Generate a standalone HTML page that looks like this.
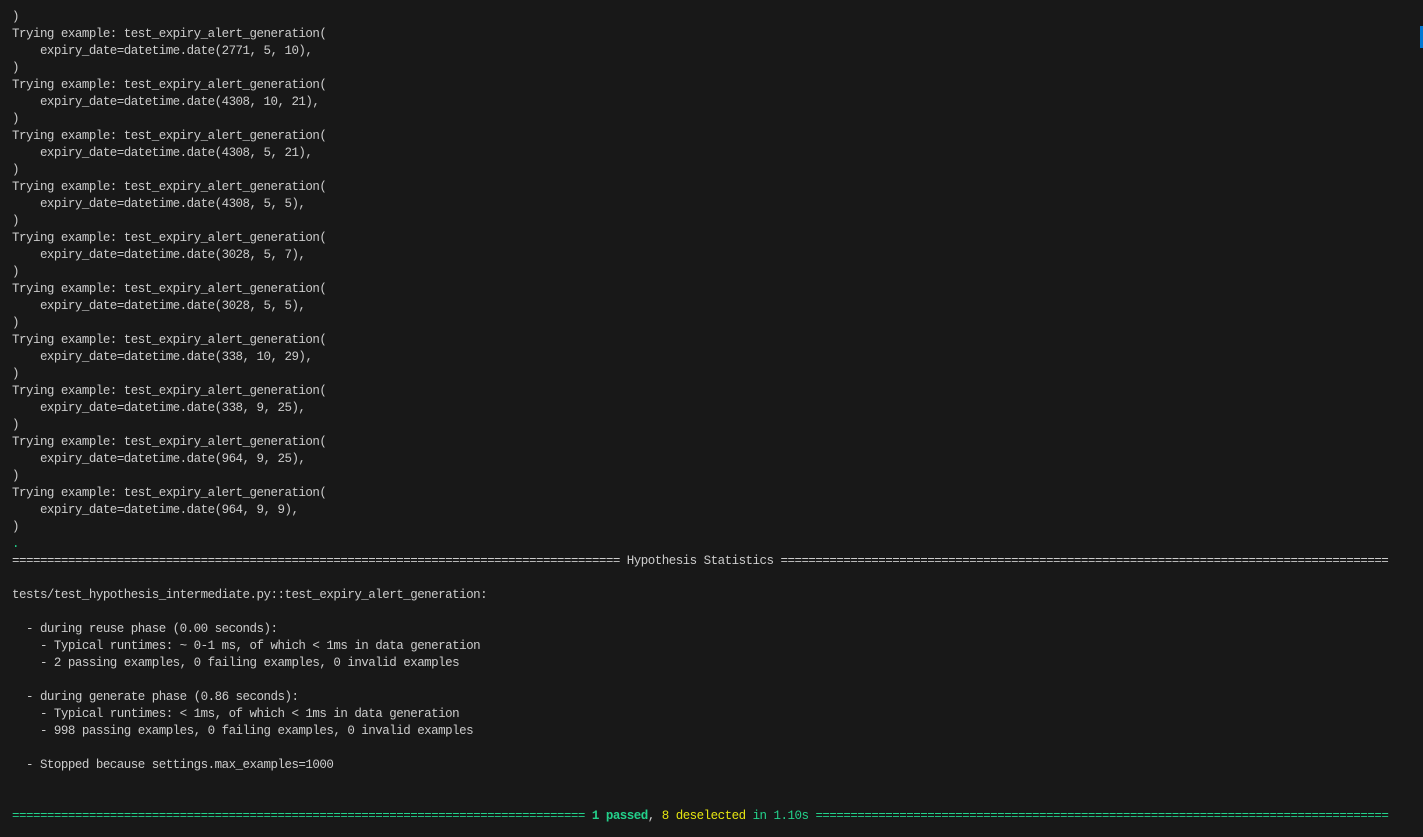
<!DOCTYPE html>
<html><head><meta charset="utf-8"><style>
html,body{margin:0;padding:0;background:#181818;width:1423px;height:837px;overflow:hidden}
pre{margin:0;position:absolute;left:12px;top:9px;font-family:"Liberation Mono",monospace;font-size:12.5px;letter-spacing:-0.515px;line-height:17px;color:#cccccc}
.g{color:#23d18b}.y{color:#e5e510}.b{font-weight:bold}
.sb{position:absolute;left:1420px;top:26px;width:3px;height:22px;background:#0078d4}
</style></head><body>
<pre>)
Trying example: test_expiry_alert_generation(
    expiry_date=datetime.date(2771, 5, 10),
)
Trying example: test_expiry_alert_generation(
    expiry_date=datetime.date(4308, 10, 21),
)
Trying example: test_expiry_alert_generation(
    expiry_date=datetime.date(4308, 5, 21),
)
Trying example: test_expiry_alert_generation(
    expiry_date=datetime.date(4308, 5, 5),
)
Trying example: test_expiry_alert_generation(
    expiry_date=datetime.date(3028, 5, 7),
)
Trying example: test_expiry_alert_generation(
    expiry_date=datetime.date(3028, 5, 5),
)
Trying example: test_expiry_alert_generation(
    expiry_date=datetime.date(338, 10, 29),
)
Trying example: test_expiry_alert_generation(
    expiry_date=datetime.date(338, 9, 25),
)
Trying example: test_expiry_alert_generation(
    expiry_date=datetime.date(964, 9, 25),
)
Trying example: test_expiry_alert_generation(
    expiry_date=datetime.date(964, 9, 9),
)
<span class="g">.</span>
======================================================================================= Hypothesis Statistics =======================================================================================

tests/test_hypothesis_intermediate.py::test_expiry_alert_generation:

  - during reuse phase (0.00 seconds):
    - Typical runtimes: ~ 0-1 ms, of which &lt; 1ms in data generation
    - 2 passing examples, 0 failing examples, 0 invalid examples

  - during generate phase (0.86 seconds):
    - Typical runtimes: &lt; 1ms, of which &lt; 1ms in data generation
    - 998 passing examples, 0 failing examples, 0 invalid examples

  - Stopped because settings.max_examples=1000


<span class="g">================================================================================== </span><span class="g b">1 passed</span>, <span class="y">8 deselected</span><span class="g"> in 1.10s ==================================================================================</span></pre>
<div class="sb"></div>
</body></html>
